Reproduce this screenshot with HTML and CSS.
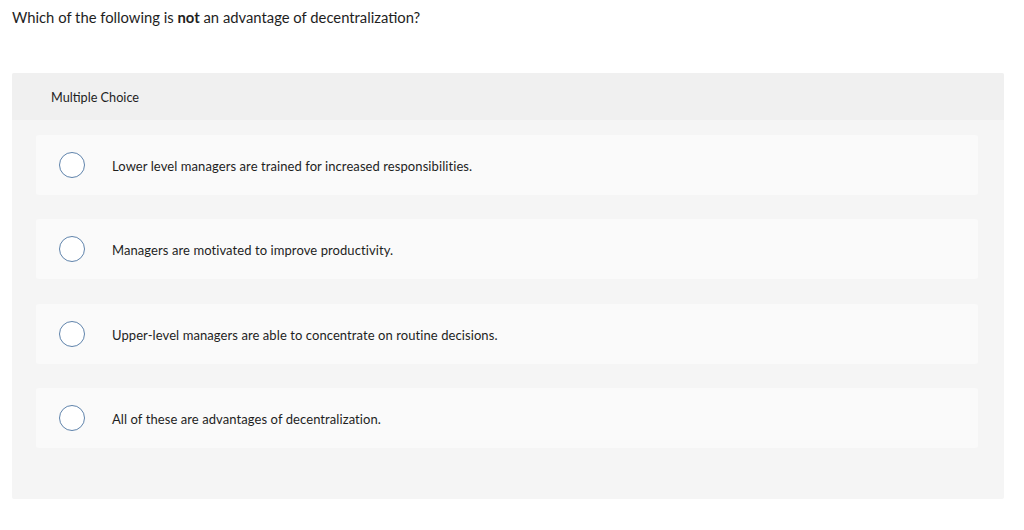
FILE: index.html
```html
<!DOCTYPE html>
<html>
<head>
<meta charset="utf-8">
<link rel="stylesheet" href="styles.css">
</head>
<body>
<div class="page">
  <p class="question">Which of the following is <strong>not</strong> an advantage of decentralization?</p>
  <div class="panel">
    <div class="panel-head">Multiple Choice</div>
    <div class="options">
      <div class="option"><span class="radio"></span><span class="label">Lower level managers are trained for increased responsibilities.</span></div>
      <div class="option"><span class="radio"></span><span class="label">Managers are motivated to improve productivity.</span></div>
      <div class="option"><span class="radio"></span><span class="label">Upper-level managers are able to concentrate on routine decisions.</span></div>
      <div class="option"><span class="radio"></span><span class="label">All of these are advantages of decentralization.</span></div>
    </div>
  </div>
</div>
</body>
</html>
```
FILE: styles.css
```css
html, body {
  margin: 0;
  padding: 0;
  background: #fff;
}
body {
  font-family: Lato, "Liberation Sans", sans-serif;
  color: #1e1e1e;
}
.page {
  padding: 0 20px 0 12px;
}
.question {
  margin: 0;
  padding-top: 8px;
  font-size: 14.8px;
  line-height: 18px;
}
.question strong {
  font-weight: 700;
}
.panel {
  margin-top: 47px;
  background: #f5f5f5;
  border-radius: 2px;
  overflow: hidden;
}
.panel-head {
  background: #f0f0f0;
  height: 47px;
  box-sizing: border-box;
  padding: 16px 0 0 39px;
  font-size: 12.7px;
  line-height: 16px;
}
.options {
  display: flex;
  flex-direction: column;
  gap: 24.4px;
  padding: 15px 26px 51px 24px;
}
.option {
  height: 60px;
  background: #fafafa;
  border-radius: 3px;
  display: flex;
  align-items: center;
  padding-left: 23px;
}
.radio {
  width: 24px;
  height: 24px;
  border: 1.5px solid #5f83ab;
  border-radius: 50%;
  background: #fff;
  flex: none;
}
.label {
  margin-left: 27px;
  font-size: 13px;
  letter-spacing: 0.08px;
  line-height: 16px;
  margin-top: 2px;
}
```
